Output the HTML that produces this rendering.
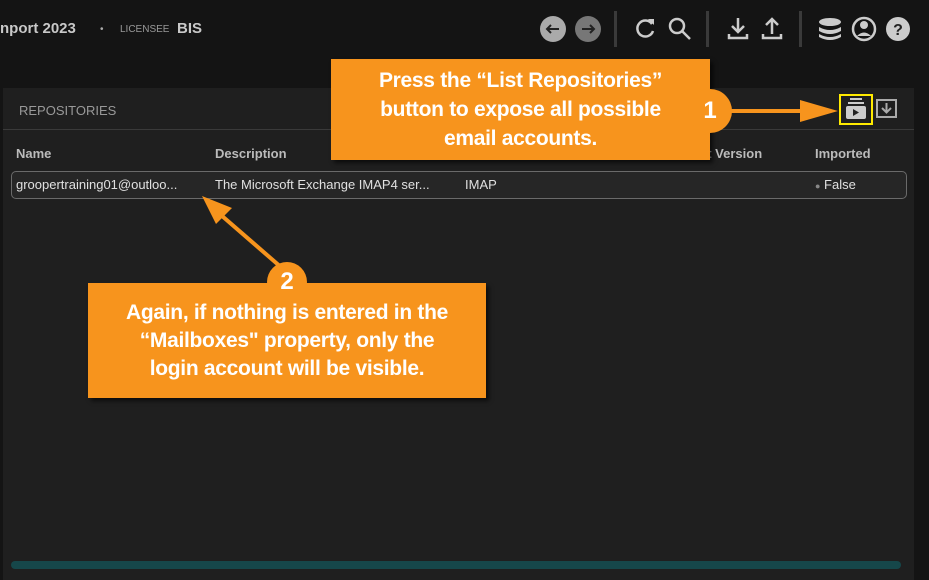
<!DOCTYPE html>
<html><head><style>
body{margin:0;width:929px;height:580px;background:#141414;font-family:"Liberation Sans","DejaVu Sans",sans-serif;position:relative;overflow:hidden;color:#ddd}
.abs{position:absolute}
.panel{left:3px;top:88px;width:911px;height:492px;background:#1f1f1f}
.hdr{font-size:13px;font-weight:bold;color:#bbb}
.cell{font-size:13px;color:#e0e0e0}
.call{background:#f7941d;color:#fff;font-weight:bold;text-align:center;box-shadow:3px 3px 4px rgba(0,0,0,.6);letter-spacing:-0.3px}
.circ{background:#f7941d;border-radius:50%;color:#fff;font-weight:bold;text-align:center}
</style></head><body>
<div class="abs" style="left:0;top:20px;font-size:15px;font-weight:bold;color:#c8c8c8">nport 2023</div>
<div class="abs" style="left:100px;top:24px;font-size:10px;color:#aaa">•</div>
<div class="abs" style="left:120px;top:24px;font-size:10px;color:#999">LICENSEE</div>
<div class="abs" style="left:177px;top:20px;font-size:15px;font-weight:bold;color:#c8c8c8">BIS</div>

<svg class="abs" style="left:530px;top:8px" width="399" height="44" viewBox="530 8 399 44">
<circle cx="553" cy="29" r="13" fill="#aaa"/><path d="M559 29H547M551 25l-4 4 4 4" stroke="#222" stroke-width="2" fill="none"/>
<circle cx="588" cy="29" r="13" fill="#777"/><path d="M582 29H594M590 25l4 4-4 4" stroke="#222" stroke-width="2" fill="none"/>
<rect x="614" y="11" width="3" height="36" fill="#3a3a3a"/>
<path d="M652 24a8 8 0 1 0 1 7" stroke="#ccc" stroke-width="2.5" fill="none"/><path d="M648 19l6 0 0 6z" fill="#ccc"/>
<circle cx="677" cy="26" r="7" stroke="#ccc" stroke-width="2.5" fill="none"/><path d="M682 31l8 8" stroke="#ccc" stroke-width="2.5"/>
<rect x="706" y="11" width="3" height="36" fill="#3a3a3a"/>
<path d="M738 18v14M732 26l6 6 6-6M729 34v4h18v-4" stroke="#ccc" stroke-width="2.5" fill="none"/>
<path d="M772 34V20M766 25l6-6 6 6M763 34v4h18v-4" stroke="#ccc" stroke-width="2.5" fill="none"/>
<rect x="799" y="11" width="3" height="36" fill="#3a3a3a"/>
<ellipse cx="830" cy="22" rx="11" ry="4" fill="#ccc"/><path d="M819 27q11 6 22 0v4q-11 6-22 0z M819 34q11 6 22 0v3q-11 6-22 0z" fill="#ccc"/>
<circle cx="864" cy="29" r="11" stroke="#ccc" stroke-width="2.5" fill="none"/><circle cx="864" cy="25" r="4" fill="#ccc"/><path d="M857 36q7-7 14 0" fill="#ccc"/>
<circle cx="898" cy="29" r="12" fill="#ccc"/><text x="898" y="35" font-size="16" font-weight="bold" text-anchor="middle" fill="#222" font-family="Liberation Sans">?</text>
</svg>

<div class="abs panel"></div>
<div class="abs" style="left:19px;top:103px;font-size:13px;color:#999">REPOSITORIES</div>
<div class="abs" style="left:3px;top:129px;width:911px;height:1px;background:#3a3a3a"></div>
<div class="abs hdr" style="left:16px;top:146px">Name</div>
<div class="abs hdr" style="left:215px;top:146px">Description</div>
<div class="abs hdr" style="left:700px;top:146px">ct Version</div>
<div class="abs hdr" style="left:815px;top:146px">Imported</div>
<div class="abs" style="left:11px;top:171px;width:894px;height:26px;border:1px solid #6a6a6a;border-radius:5px;background:#262626"></div>
<div class="abs cell" style="left:16px;top:177px">groopertraining01@outloo...</div>
<div class="abs cell" style="left:215px;top:177px">The Microsoft Exchange IMAP4 ser...</div>
<div class="abs cell" style="left:465px;top:177px">IMAP</div>
<div class="abs cell" style="left:815px;top:177px"><span style="color:#888;font-size:9px">●</span> False</div>
<div class="abs" style="left:11px;top:561px;width:890px;height:8px;border-radius:4px;background:#16474a"></div>

<div class="abs" style="left:839px;top:94px;width:34px;height:31px;border:2px solid #ffea00;box-sizing:border-box"></div>
<svg class="abs" style="left:845px;top:97px" width="22" height="24"><rect x="5" y="1" width="12" height="2" fill="#ccc"/><rect x="3" y="5" width="16" height="2" fill="#ccc"/><rect x="1" y="9" width="20" height="13" rx="2" fill="#ccc"/><path d="M8 12v7l6-3.5z" fill="#222"/></svg>
<svg class="abs" style="left:876px;top:99px" width="22" height="20"><rect x="1" y="1" width="19" height="17" stroke="#aaa" stroke-width="2" fill="none"/><path d="M10.5 4v9M6 9l4.5 4.5L15 9" stroke="#aaa" stroke-width="2" fill="none"/></svg>

<svg class="abs" style="left:0;top:0" width="929" height="580">
<path d="M725 111H805" stroke="#f7941d" stroke-width="4"/><path d="M800 100l38 11-38 11z" fill="#f7941d"/>
<path d="M282 268L214 209" stroke="#f7941d" stroke-width="4"/><path d="M202 196l30 12-16 16z" fill="#f7941d"/>
</svg>
<div class="abs call" style="left:331px;top:59px;width:379px;height:101px;font-size:21px;line-height:29px;padding-top:7px;box-sizing:border-box">Press the “List Repositories”<br>button to expose all possible<br>email accounts.</div>
<div class="abs circ" style="left:688px;top:89px;width:44px;height:44px;font-size:24px;line-height:44px">1</div>
<div class="abs call" style="left:88px;top:283px;width:398px;height:115px;font-size:21px;line-height:28px;padding-top:16px;box-sizing:border-box">Again, if nothing is entered in the<br>“Mailboxes" property, only the<br>login account will be visible.</div>
<div class="abs circ" style="left:267px;top:262px;width:40px;height:40px;font-size:24px;line-height:40px">2</div>
</body></html>
